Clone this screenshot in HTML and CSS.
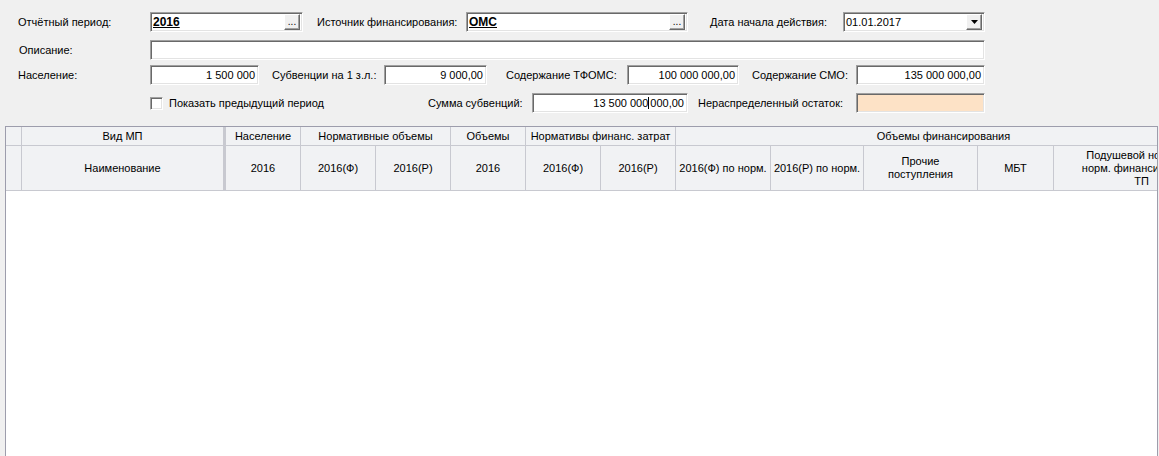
FILE: index.html
```html
<!DOCTYPE html>
<html lang="ru">
<head>
<meta charset="utf-8">
<title>Период</title>
<link rel="stylesheet" href="styles.css">
</head>
<body>
<div class="form">
  <div class="row r1">
    <span class="lbl w132">Отчётный период:</span>
    <div class="field w153"><span class="val bold">2016</span><span class="btn-ell">...</span></div>
    <span class="lbl l-src">Источник финансирования:</span>
    <div class="field w222"><span class="val bold">ОМС</span><span class="btn-ell">...</span></div>
    <span class="lbl l-date">Дата начала действия:</span>
    <div class="field w142"><span class="val">01.01.2017</span><span class="btn-drop"><svg width="7" height="4" viewBox="0 0 7 4"><path d="M0 0h7L3.5 4z" fill="#000"/></svg></span></div>
  </div>
  <div class="row r2">
    <span class="lbl w132 ind1">Описание:</span>
    <div class="field w835"></div>
  </div>
  <div class="row r3">
    <span class="lbl w132">Население:</span>
    <div class="field num w109"><span class="val">1 500 000</span></div>
    <span class="lbl l-sub">Субвенции на 1 з.л.:</span>
    <div class="field num w103"><span class="val">9 000,00</span></div>
    <span class="lbl l-tf">Содержание ТФОМС:</span>
    <div class="field num w112"><span class="val">100 000 000,00</span></div>
    <span class="lbl l-smo">Содержание СМО:</span>
    <div class="field num w129"><span class="val">135 000 000,00</span></div>
  </div>
  <div class="row r4">
    <span class="w132"></span>
    <span class="check"></span>
    <span class="lbl l-chk">Показать предыдущий период</span>
    <span class="lbl l-sum">Сумма субвенций:</span>
    <div class="field num w156"><span class="val">13 500 000<span class="caret"></span>000,00</span></div>
    <span class="lbl l-ost">Нераспределенный остаток:</span>
    <div class="field w129 peach"></div>
  </div>
</div>

<div class="grid">
  <div class="head">
    <div class="c ind r1c"></div>
    <div class="c name r1c">Вид МП</div>
    <div class="sep"></div>
    <div class="c r1c">Население</div>
    <div class="c r1c span2">Нормативные объемы</div>
    <div class="c r1c">Объемы</div>
    <div class="c r1c span2">Нормативы финанс. затрат</div>
    <div class="c r1c span5 grp">Объемы финансирования</div>

    <div class="c ind"></div>
    <div class="c name">Наименование</div>
    <div class="c">2016</div>
    <div class="c">2016(Ф)</div>
    <div class="c">2016(Р)</div>
    <div class="c">2016</div>
    <div class="c">2016(Ф)</div>
    <div class="c">2016(Р)</div>
    <div class="c">2016(Ф) по норм.</div>
    <div class="c">2016(Р) по норм.</div>
    <div class="c">Прочие<br>поступления</div>
    <div class="c">МБТ</div>
    <div class="c">Подушевой норматив<br>норм. финансирования<br>ТП</div>
  </div>
  <div class="body"></div>
</div>
</body>
</html>
```
FILE: styles.css
```css
html, body {
  margin: 0;
  padding: 0;
}
body {
  width: 1159px;
  height: 456px;
  overflow: hidden;
  background: #f0f0f0;
  font-family: "Liberation Sans", Arial, sans-serif;
  font-size: 11px;
  color: #000;
}
.form {
  padding: 12px 0 0 18px;
}
.row {
  display: flex;
  align-items: center;
  height: 20px;
}
.r2 { margin-top: 8px; }
.r3 { margin-top: 5px; }
.r4 { margin-top: 8px; }
.lbl {
  flex-shrink: 0;
  white-space: nowrap;
}
.w132 { width: 132px; flex-shrink: 0; }
.ind1 { padding-left: 1px; box-sizing: border-box; }
.l-src { margin-left: 14px; width: 149px; }
.l-date { width: 155px; text-align: right; padding-right: 16px; box-sizing: border-box; }
.l-sub { margin-left: 13px; width: 112px; }
.l-tf { margin-left: 19px; width: 121px; }
.l-smo { margin-left: 13px; width: 104px; }
.l-chk { margin-left: 6px; width: 259px; }
.l-sum { width: 104px; }
.l-ost { margin-left: 10px; width: 158px; }

.field {
  box-sizing: border-box;
  height: 20px;
  flex-shrink: 0;
  background: #fff;
  border: 1px solid;
  border-color: #a0a0a0 #fff #fff #a0a0a0;
  box-shadow: inset 1px 1px 0 #696969, inset -1px -1px 0 #e3e3e3;
  display: flex;
  align-items: center;
  padding: 0 2px 0 2px;
}
.field.num { justify-content: flex-end; padding-right: 3px; }
.peach { background: #fde2c6; }
.w153 { width: 153px; }
.w222 { width: 222px; }
.w142 { width: 142px; }
.w835 { width: 835px; }
.w109 { width: 109px; }
.w103 { width: 103px; }
.w112 { width: 112px; }
.w129 { width: 129px; }
.w156 { width: 156px; }
.val { white-space: nowrap; }
.bold {
  font-weight: bold;
  font-size: 12px;
  text-decoration: underline;
}
.caret {
  display: inline-block;
  width: 1px;
  height: 12px;
  background: #000;
  vertical-align: -2px;
  margin: 0 1px 0 0;
}
.btn-ell, .btn-drop {
  margin-left: auto;
  box-sizing: border-box;
  width: 16px;
  height: 16px;
  background: #f0f0f0;
  border: 1px solid;
  border-color: #fff #696969 #696969 #fff;
  box-shadow: inset -1px -1px 0 #a0a0a0;
  display: flex;
  align-items: flex-end;
  justify-content: center;
  font-size: 10px;
  line-height: 10px;
  padding-bottom: 2px;
  letter-spacing: 0;
}
.btn-drop {
  align-items: center;
  padding: 0 0 0 0;
}
.check {
  box-sizing: border-box;
  width: 13px;
  height: 13px;
  flex-shrink: 0;
  background: #fff;
  border: 1px solid;
  border-color: #a0a0a0 #fff #fff #a0a0a0;
  box-shadow: inset 1px 1px 0 #696969, inset -1px -1px 0 #e3e3e3;
}

.grid {
  margin: 13px 0 0 5px;
  width: 1153px;
  height: 340px;
  box-sizing: border-box;
  border: 1px solid #9d9dac;
  border-bottom: none;
  background: #fff;
  overflow: hidden;
}
.head {
  display: grid;
  grid-template-columns: 16px 201px 3px 75px 75px 75px 75px 75px 75px 95px 93px 114px 76px 176px;
  grid-template-rows: 19px 45px;
  width: 1224px;
  background: #f1f2f4;
}
.c {
  box-sizing: border-box;
  border-right: 1px solid #c8c9d0;
  border-bottom: 1px solid #c8c9d0;
  display: flex;
  align-items: center;
  justify-content: center;
  text-align: center;
  white-space: nowrap;
  line-height: 13px;
  overflow: hidden;
}
.name { border-right: none; }
.r1c { padding-top: 0; }
.sep {
  grid-row: 1 / span 2;
  grid-column: 3;
  background: #c8c9d0;
}
.span2 { grid-column: span 2; }
.span5 { grid-column: span 5; }
.grp { padding-right: 18px; }
```
